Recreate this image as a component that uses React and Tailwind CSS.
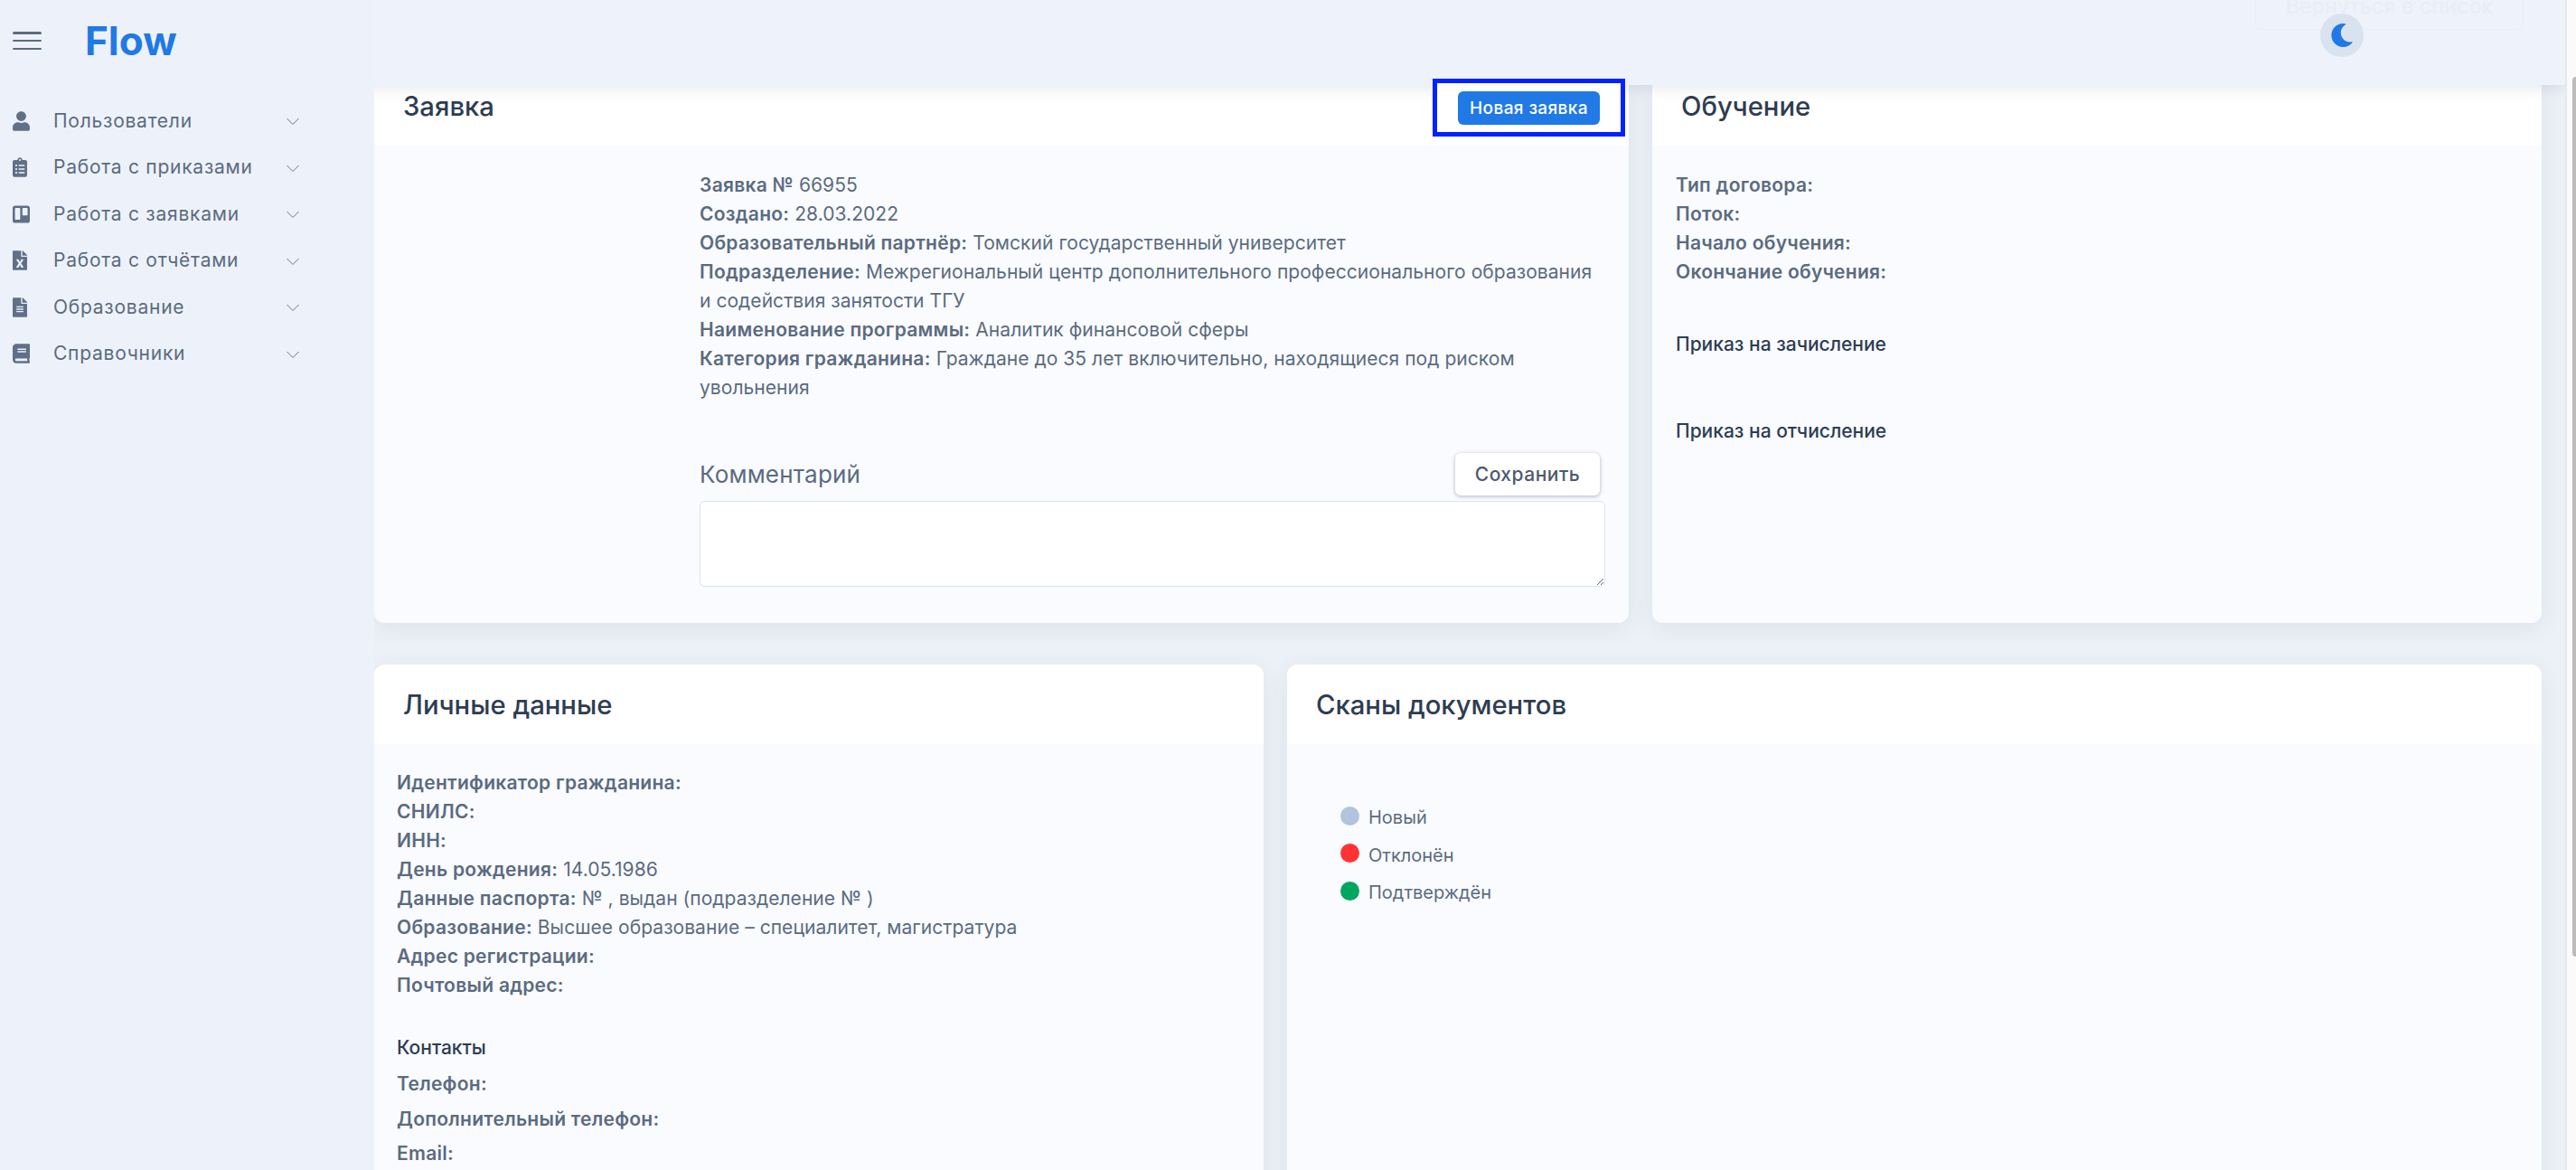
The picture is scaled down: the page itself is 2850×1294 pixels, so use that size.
import React from "react";
import { FaUser, FaClipboardList, FaTrello, FaFileExcel, FaFileAlt, FaBook, FaMoon } from "react-icons/fa";

const nav = [
  ["Пользователи", FaUser, "w-[19px]"],
  ["Работа с приказами", FaClipboardList, "w-[16px]"],
  ["Работа с заявками", FaTrello, "w-[19px]"],
  ["Работа с отчётами", FaFileExcel, "w-[16px]"],
  ["Образование", FaFileAlt, "w-[16px]"],
  ["Справочники", FaBook, "w-[19px]"],
];

function Line({ label, children }) {
  return (
    <p className="tracking-[0.05px]">
      <span className="font-semibold tracking-[0.27px]">{label}</span>
      {children ? " " + children : ""}
    </p>
  );
}

function Card({ title, action, className, bodyClassName, children }) {
  return (
    <section className={"flex flex-col rounded-[12px] bg-[#f9fbff] shadow-[0_6px_26px_rgba(60,70,90,0.08)] " + className}>
      <header className="flex h-[88px] shrink-0 items-center justify-between rounded-t-[12px] bg-white">
        <h2 className="pl-[32px] pt-[2px] text-[29.25px] font-medium leading-[36px] text-[#2e3d52]">{title}</h2>
        {action}
      </header>
      <div className={bodyClassName}>{children}</div>
    </section>
  );
}

export default function App() {
  return (
    <div
      className="relative flex h-[1294px] w-[2850px] overflow-hidden bg-[#ecf1f8] text-[21px] leading-[32px] text-[#5c6b80]"
      style={{ fontFamily: "Inter, 'Noto Sans', sans-serif" }}
    >
      <aside className="relative z-20 flex w-[414px] shrink-0 flex-col bg-[#edf2fa]">
        <div className="flex h-[94px] items-center pb-[4px]">
          <div className="ml-[14px] flex h-[20px] w-[32px] flex-col justify-between">
            <span className="h-[2.5px] rounded bg-[#5c6b80]" />
            <span className="h-[2.5px] rounded bg-[#5c6b80]" />
            <span className="h-[2.5px] rounded bg-[#5c6b80]" />
          </div>
          <span className="ml-[48px] text-[44px] font-bold leading-[50px] text-[#2079e5]">Flow</span>
        </div>
        <nav className="mt-[14px] flex flex-col">
          {nav.map(([name, Icon, w]) => (
            <div key={name} className="flex h-[51.5px] items-center">
              <span className="flex w-[59px] shrink-0 pl-[14px]">
                <Icon className={w + " h-[22px] text-[#5f7088]"} />
              </span>
              <span className="w-[258px] shrink-0 tracking-[0.75px] text-[#5c6b80]">{name}</span>
              <svg width="14" height="9" viewBox="0 0 14 9" fill="none" className="mt-[2px]">
                <path d="M0.5 1 L7 7.5 L13.5 1" stroke="#65758c" strokeWidth="1" />
              </svg>
            </div>
          ))}
        </nav>
      </aside>

      <div className="relative flex min-w-0 flex-1 flex-col">
        <div className="absolute left-[-414px] right-0 top-0 z-10 h-[94px] bg-[#edf2fa]/[0.97] shadow-[0_4px_14px_rgba(60,80,120,0.12)]">
          <div className="absolute left-[2495px] top-[-20px] flex h-[53px] w-[297px] items-center justify-center rounded-[6px] border border-[#e9eef7] text-[23.5px] text-[#e8edf6]">
            Вернуться в список
          </div>
          <div className="absolute left-[2567px] top-[15px] flex h-[48px] w-[48px] items-center justify-center rounded-full bg-[#d9e3f0]">
            <FaMoon className="h-[26px] w-[26px] text-[#2079e5]" />
          </div>
        </div>

        <main className="flex flex-col gap-[46px] pr-[28px] pt-[73px]">
          <div className="grid grid-cols-[1388px_984px] gap-[26px]">
            <Card
              title="Заявка"
              className="h-[616px]"
              bodyClassName="pl-[360px] pr-[26px] pt-[28px]"
              action={
                <div className="relative z-30 mr-[4px] mt-[14px] flex h-[64px] w-[213px] items-center justify-center self-start border-[5px] border-[#0022ff] bg-white">
                  <button className="h-[37px] w-[157px] rounded-[6px] bg-[#2079e5] text-[19px] font-medium leading-[37px] tracking-[0.4px] text-white">
                    Новая заявка
                  </button>
                </div>
              }
            >
              <div className="max-w-[995px]">
                <Line label="Заявка №">66955</Line>
                <Line label="Создано:">28.03.2022</Line>
                <Line label="Образовательный партнёр:">Томский государственный университет</Line>
                <Line label="Подразделение:">Межрегиональный центр дополнительного профессионального образования и содействия занятости ТГУ</Line>
                <Line label="Наименование программы:">Аналитик финансовой сферы</Line>
                <Line label="Категория гражданина:">Граждане до 35 лет включительно, находящиеся под риском увольнения</Line>
              </div>
              <div className="mt-[56px] flex items-center justify-between pr-[6px]">
                <span className="text-[26px] tracking-[0.2px] text-[#5c6b80]">Комментарий</span>
                <button className="h-[47px] w-[160px] rounded-[6px] bg-white text-[21px] font-medium tracking-[0.5px] text-[#4c5a6f] shadow-[0_1px_4px_rgba(60,70,100,0.4)]">
                  Сохранить
                </button>
              </div>
              <textarea
                readOnly
                className="mt-[6px] block h-[95px] w-[1002px] rounded-[6px] border border-[#dbe3ef] bg-white"
              />
            </Card>

            <Card title="Обучение" className="h-[616px]" bodyClassName="pl-[26px] pt-[28px]">
              <Line label="Тип договора:" />
              <Line label="Поток:" />
              <Line label="Начало обучения:" />
              <Line label="Окончание обучения:" />
              <p className="mt-[48px] font-medium text-[#2e3d52]">Приказ на зачисление</p>
              <p className="mt-[64px] font-medium text-[#2e3d52]">Приказ на отчисление</p>
            </Card>
          </div>

          <div className="grid grid-cols-[984px_1388px] gap-[26px]">
            <Card title="Личные данные" className="h-[700px]" bodyClassName="pl-[25px] pt-[27px]">
              <Line label="Идентификатор гражданина:" />
              <Line label="СНИЛС:" />
              <Line label="ИНН:" />
              <Line label="День рождения:">14.05.1986</Line>
              <Line label="Данные паспорта:">№ , выдан (подразделение № )</Line>
              <Line label="Образование:">Высшее образование – специалитет, магистратура</Line>
              <Line label="Адрес регистрации:" />
              <Line label="Почтовый адрес:" />
              <p className="mt-[37px] font-medium text-[#2e3d52]">Контакты</p>
              <div className="mt-[8px] flex flex-col gap-[6.5px]">
                <Line label="Телефон:" />
                <Line label="Дополнительный телефон:" />
                <Line label="Email:" />
              </div>
            </Card>

            <Card title="Сканы документов" className="h-[700px]" bodyClassName="pl-[59px] pt-[65px]">
              <div className="flex flex-col gap-[9.5px]">
                {[
                  ["Новый", "bg-[#b0c4de]"],
                  ["Отклонён", "bg-[#ff3333]"],
                  ["Подтверждён", "bg-[#00a65f]"],
                ].map(([t, c]) => (
                  <div key={t} className="flex items-center">
                    <span className={"mb-[4px] h-[21px] w-[21px] rounded-full " + c} />
                    <span className="ml-[10px] text-[20px]">{t}</span>
                  </div>
                ))}
              </div>
            </Card>
          </div>
        </main>
      </div>

      <div className="relative z-30 w-[12px] shrink-0 border-l-2 border-[#e4e7ec] bg-[#fafafa] pl-[6px] pt-[85px]">
        <div className="h-[973px] w-[4px] rounded-l-[4px] bg-[#bbbbbb]" />
      </div>
    </div>
  );
}
